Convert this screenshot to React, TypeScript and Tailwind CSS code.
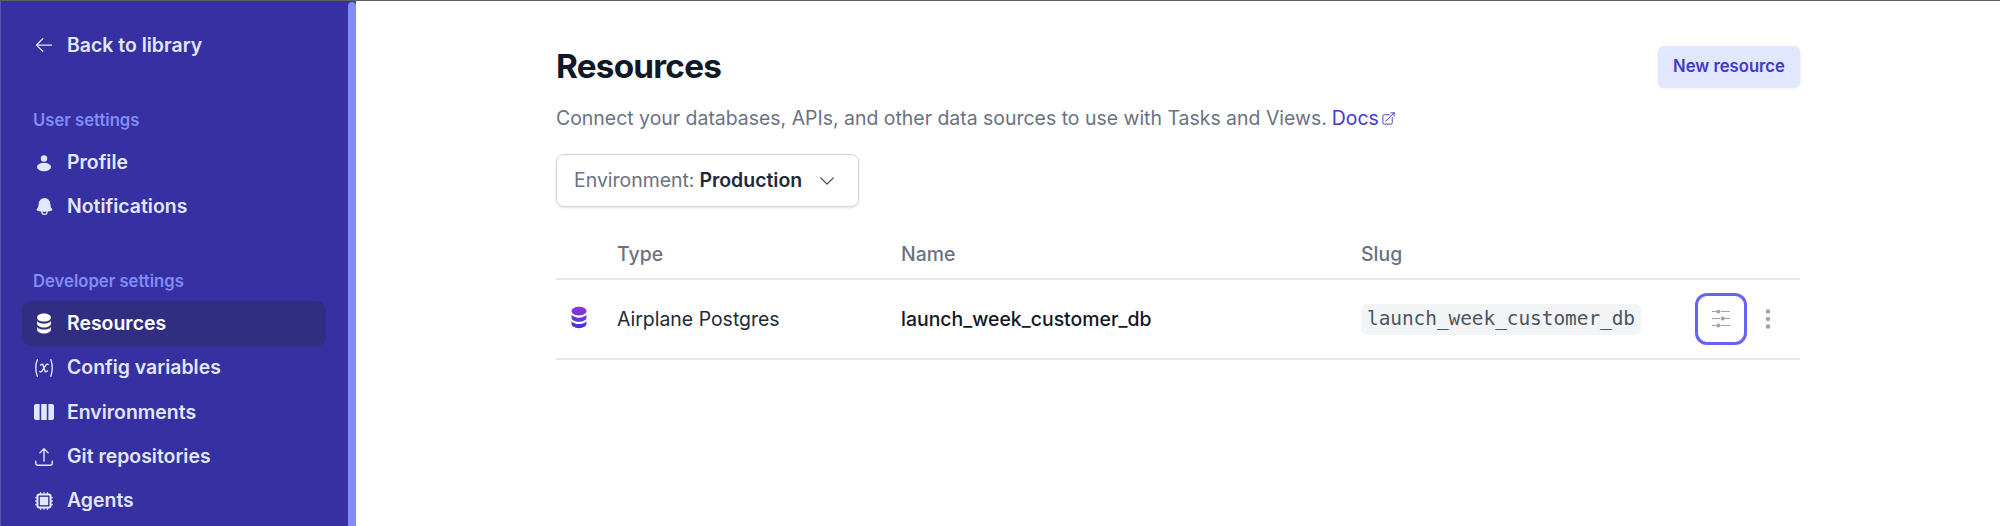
import type { ReactNode } from "react";
import {
  HiArrowLeft,
  HiOutlineArrowUpTray,
  HiBell,
  HiOutlineVariable,
  HiCpuChip,
  HiChevronDown,
  HiOutlineArrowTopRightOnSquare,
} from "react-icons/hi2";

function ProfileIcon() {
  return (
    <svg viewBox="0 0 20 20" fill="currentColor" className="w-[20px] h-[20px]">
      <circle cx="10" cy="5.5" r="3.2" />
      <ellipse cx="10" cy="14" rx="7" ry="4.2" />
    </svg>
  );
}

const dbPath =
  "M8 .5c4.2 0 7.5 1.9 7.5 4.3S12.2 9.2 8 9.2.5 7.2.5 4.8 3.8.5 8 .5ZM.5 8.6c1.5 1.9 4.2 2.8 7.5 2.8s6-.9 7.5-2.8v2.6c0 2.4-3.3 4.3-7.5 4.3S.5 13.6.5 11.2V8.6ZM.5 15c1.5 1.9 4.2 2.8 7.5 2.8s6-.9 7.5-2.8v2.6c0 2.4-3.3 4.3-7.5 4.3S.5 20 .5 17.6V15Z";

function SidebarDb() {
  return (
    <svg viewBox="0 0 16 22.5" fill="currentColor" className="w-[16px] h-[21px]">
      <path d={dbPath} />
    </svg>
  );
}

function GradientDb() {
  return (
    <svg viewBox="0 0 16 22.5" className="w-[16px] h-[23px]">
      <defs>
        <linearGradient id="dbFill" x1="0" y1="0" x2="0" y2="1">
          <stop offset="0%" stopColor="#9333ea" />
          <stop offset="100%" stopColor="#4338ca" />
        </linearGradient>
      </defs>
      <path fill="url(#dbFill)" d={dbPath} />
    </svg>
  );
}

function ColumnsIcon() {
  return (
    <svg viewBox="0 0 20 16" fill="currentColor" className="w-[20px] h-[16px]">
      <path d="M2 0h3.6v16H2a2 2 0 0 1-2-2V2a2 2 0 0 1 2-2Z" />
      <rect x="7.2" y="0" width="5.6" height="16" />
      <path d="M14.4 0H18a2 2 0 0 1 2 2v12a2 2 0 0 1-2 2h-3.6V0Z" />
    </svg>
  );
}

// three slider rows: dash, knob, dash
function SlidersIcon() {
  return (
    <svg viewBox="0 0 18 18" className="w-[18px] h-[18px] text-[#9ca3af]" fill="currentColor">
      <path d="M0 1.5h4M9 1.5h9M0 8.5h8M13 8.5h5M0 15.5h4M9 15.5h9" stroke="currentColor" strokeWidth="1.2" />
      <circle cx="6.3" cy="1.5" r="2" />
      <circle cx="10.8" cy="8.5" r="2" />
      <circle cx="6.3" cy="15.5" r="2" />
    </svg>
  );
}

function DotsIcon() {
  return (
    <svg viewBox="0 0 8 24" className="w-[8px] h-[24px] text-[#9ca3af]" fill="currentColor">
      <circle cx="4" cy="4.5" r="2.2" />
      <circle cx="4" cy="12" r="2.2" />
      <circle cx="4" cy="19.5" r="2.2" />
    </svg>
  );
}

function NavItem({ icon, label, active }: { icon: ReactNode; label: string; active?: boolean }) {
  return (
    <div
      className={`flex items-center h-[44.4px] rounded-[9px] pl-[11px] text-[19.44px] font-semibold ${
        active ? "bg-[#312e81] text-white" : "text-[#e0e7ff]"
      }`}
    >
      <span className="w-[22px] flex justify-center">{icon}</span>
      <span className="ml-[12px]">{label}</span>
    </div>
  );
}

export default function App() {
  return (
    <div className="h-[526px] overflow-hidden flex flex-col bg-white font-['Inter',sans-serif]">
      <div className="h-px bg-[#5f5f5f]" />
      <div className="flex flex-1 min-h-0">
        {/* Sidebar */}
        <aside className="w-[356px] shrink-0 flex bg-[#3730a3] border-l border-[#5a55b5]">
          <div className="flex-1 pl-[21px] pr-[22px] overflow-hidden">
            <div className="mt-[22px]">
              <NavItem icon={<HiArrowLeft size={20} />} label="Back to library" />
            </div>
            <div className="mt-[37px] pl-[11px] h-[32px] flex items-center text-[16.67px] font-semibold text-[#818cf8]">
              User settings
            </div>
            <div className="mt-[4px]">
              <NavItem icon={<ProfileIcon />} label="Profile" />
              <NavItem icon={<HiBell size={21} />} label="Notifications" />
            </div>
            <div className="mt-[36px] pl-[11px] h-[32px] flex items-center text-[16.67px] font-semibold text-[#818cf8]">
              Developer settings
            </div>
            <div className="mt-[4px]">
              <NavItem icon={<SidebarDb />} label="Resources" active />
              <NavItem icon={<HiOutlineVariable size={24} />} label="Config variables" />
              <NavItem icon={<ColumnsIcon />} label="Environments" />
              <NavItem icon={<HiOutlineArrowUpTray size={24} />} label="Git repositories" />
              <NavItem icon={<HiCpuChip size={24} />} label="Agents" />
            </div>
          </div>
          <div className="w-[8px] mt-px rounded-t-[4px] bg-[#818cf8]" />
        </aside>

        {/* Main */}
        <main className="flex-1 pl-[200px] pr-[200px]">
          <div className="flex items-start justify-between mt-[45px]">
            <h1 className="text-[33.3px] leading-[40px] font-bold tracking-[-0.75px] text-[#111827]">Resources</h1>
            <button className="w-[142px] h-[41px] rounded-[6px] bg-[#e0e7ff] text-[#4338ca] text-[16.67px] font-semibold shadow-sm">
              New resource
            </button>
          </div>
          <p className="mt-[17px] text-[19.44px] leading-[28px] text-[#6b7280] flex items-center">
            Connect your databases, APIs, and other data sources to use with Tasks and Views.
            <span className="ml-[5px] text-[#4338ca]">Docs</span>
            <HiOutlineArrowTopRightOnSquare size={15} className="ml-[2px] text-[#4338ca]" />
          </p>
          <button className="mt-[22px] w-[303px] h-[53px] rounded-[8px] border border-[#d1d5db] shadow-sm flex items-center pl-[17px] text-[19.44px] text-[#6b7280]">
            Environment:
            <span className="ml-[5px] font-semibold text-[#1f2937]">Production</span>
            <HiChevronDown size={20} className="ml-[15px] text-[#374151]" />
          </button>

          {/* Table */}
          <div className="mt-[25px] flex items-center h-[48px] border-b-2 border-[#e5e7eb] text-[19.44px] font-medium text-[#6b7280]">
            <span className="ml-[61px] w-[284px]">Type</span>
            <span className="w-[460px]">Name</span>
            <span>Slug</span>
          </div>
          <div className="flex items-center h-[80px] border-b-2 border-[#e5e7eb] text-[19.44px]">
            <span className="w-[61px] pl-[15px] -mt-[4px] flex">
              <GradientDb />
            </span>
            <span className="w-[284px] text-[#1f2937] pt-[1px]">Airplane Postgres</span>
            <span className="w-[460px] font-medium text-[#111827] pt-[1px]">launch_week_customer_db</span>
            <code className="h-[31px] w-[280px] shrink-0 flex items-center justify-center rounded-[6px] bg-[#f3f4f6] text-[#4b5563] text-[19.44px] font-['DejaVu_Sans_Mono',monospace] tracking-[-0.05px]">
              launch_week_customer_db
            </code>
            <button className="ml-[54px] w-[52px] h-[52px] shrink-0 rounded-[12px] border-[3px] border-[#6366f1] flex items-center justify-center">
              <SlidersIcon />
            </button>
            <span className="ml-[17px] shrink-0 flex">
              <DotsIcon />
            </span>
          </div>
        </main>
      </div>
    </div>
  );
}
